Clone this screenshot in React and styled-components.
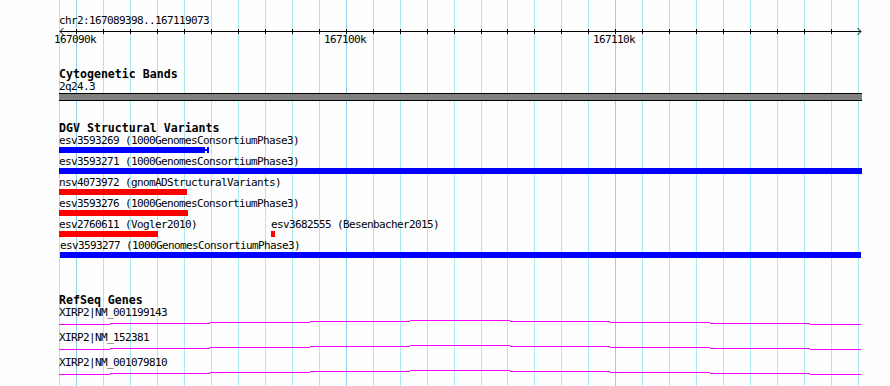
import React from 'react';
import styled, { createGlobalStyle } from 'styled-components';

const ORIGIN_BP = 167090000;
const ORIGIN_PX = 75.8;
const PX_PER_BP = 0.02698;
const TRACK_LEFT = 59;
const TRACK_RIGHT = 862;

const toPx = (bp) => ORIGIN_PX + (bp - ORIGIN_BP) * PX_PER_BP;
const clampPx = (x) => Math.min(TRACK_RIGHT, Math.max(TRACK_LEFT, x));
const localX = (bp) => Math.round(clampPx(toPx(bp))) - TRACK_LEFT;

const kbTicks = Array.from({ length: 30 }, (_, i) => ({
  kb: 167090 + i,
  x: Math.round(ORIGIN_PX + i * 26.98),
  major: i % 10 === 0,
}));

const dgvRows = [
  [{ id: 'esv3593269', src: '1000GenomesConsortiumPhase3', start: 167089000, end: 167094789, color: '#0000ff', capped: true }],
  [{ id: 'esv3593271', src: '1000GenomesConsortiumPhase3', start: 167089000, end: 167120000, color: '#0000ff' }],
  [{ id: 'nsv4073972', src: 'gnomADStructuralVariants', start: 167089000, end: 167094122, color: '#ff0000' }],
  [{ id: 'esv3593276', src: '1000GenomesConsortiumPhase3', start: 167089000, end: 167094159, color: '#ff0000' }],
  [
    { id: 'esv2760611', src: 'Vogler2010', start: 167089000, end: 167093047, color: '#ff0000' },
    { id: 'esv3682555', src: 'Besenbacher2015', start: 167097235, end: 167097383, color: '#ff0000' },
  ],
  [{ id: 'esv3593277', src: '1000GenomesConsortiumPhase3', start: 167089414, end: 167119085, color: '#0000ff' }],
];

const genes = ['XIRP2|NM_001199143', 'XIRP2|NM_152381', 'XIRP2|NM_001079810'];
const geneSteps = [
  [0, 51, 5], [51, 151, 4], [151, 251, 3], [251, 351, 2], [351, 451, 1],
  [451, 551, 2], [551, 651, 3], [651, 751, 4], [751, 802, 5],
];

const GlobalStyle = createGlobalStyle`
  html, body { margin: 0; padding: 0; background: #fdfefd; }
`;

const Page = styled.div`
  position: relative;
  width: 890px;
  height: 386px;
  overflow: hidden;
  background: #fdfefd;
  color: #000;
  font-family: "DejaVu Sans Mono", "Liberation Mono", monospace;
`;

const Grid = styled.svg`
  position: absolute;
  top: 0;
  left: 0;
  z-index: 0;
  pointer-events: none;
`;

const Main = styled.div`
  position: relative;
  z-index: 1;
  display: flex;
  flex-direction: column;
  width: 803px;
  padding: 15px 0 0 59px;
`;

const PlainText = styled.div`
  font-size: 11px;
  letter-spacing: -0.62px;
  line-height: 12px;
  height: 12px;
  white-space: nowrap;
`;

const RulerSvg = styled.svg`
  display: block;
  overflow: visible;
`;

const TrackTitle = styled.div`
  font-size: 11.6px;
  font-weight: bold;
  line-height: ${(p) => p.$lh || 14}px;
  height: ${(p) => p.$lh || 14}px;
  margin-top: ${(p) => p.$gap}px;
  white-space: nowrap;
`;

const CytoBar = styled.div`
  height: 6px;
  border-top: 1px solid #000;
  border-bottom: 1px solid #000;
  background: #808080;
`;

const FeatureRow = styled.div`
  position: relative;
  height: 21px;
`;

const FeatureLabel = styled(PlainText)`
  position: absolute;
  top: 0;
`;

const FeatureBar = styled.div`
  position: absolute;
  top: 12px;
  height: 6px;
  background: ${(p) => p.$color};
  &::after {
    content: '';
    display: ${(p) => (p.$capped ? 'block' : 'none')};
    position: absolute;
    left: 100%;
    top: 0;
    width: 4px;
    height: 100%;
    background:
      linear-gradient(${(p) => p.$color}, ${(p) => p.$color}) right / 2px 100% no-repeat,
      linear-gradient(${(p) => p.$color}, ${(p) => p.$color}) left center / 2px 2px no-repeat;
  }
`;

const GeneRow = styled.div`
  display: flex;
  flex-direction: column;
`;

const GeneGlyph = styled.svg`
  display: block;
`;

function Ruler() {
  return (
    <RulerSvg width="803" height="18">
      <line x1="1" y1="4.5" x2="802" y2="4.5" stroke="#000" strokeWidth="1" />
      <polyline points="4.5,1 1,4.5 4.5,8" fill="none" stroke="#000" strokeWidth="1" />
      <polyline points="798.5,1 802,4.5 798.5,8" fill="none" stroke="#000" strokeWidth="1" />
      {kbTicks.slice(0, 29).map((t) => (
        <line key={t.kb} x1={t.x - TRACK_LEFT + 0.5} y1="2" x2={t.x - TRACK_LEFT + 0.5} y2="7" stroke="#000" strokeWidth="1" />
      ))}
      {kbTicks.filter((t) => t.major).map((t) => (
        <text
          key={t.kb}
          x={t.x - TRACK_LEFT - 1}
          y="16"
          textAnchor="middle"
          fontSize="11"
          letterSpacing="-0.62"
          fontFamily="DejaVu Sans Mono, monospace"
          fill="#000"
        >
          {`${t.kb}k`}
        </text>
      ))}
    </RulerSvg>
  );
}

export default function App() {
  return (
    <>
      <GlobalStyle />
      <Page>
        <Grid width="890" height="386">
          <line x1="59.5" y1="0" x2="59.5" y2="386" stroke="#aae9ee" strokeWidth="1" />
          {kbTicks.map((t) => (
            <line
              key={t.kb}
              x1={t.x + 0.5}
              y1="0"
              x2={t.x + 0.5}
              y2="386"
              stroke={t.major ? '#8fcfea' : '#aae9ee'}
              strokeWidth="1"
            />
          ))}
        </Grid>
        <Main>
          <PlainText>chr2:167089398..167119073</PlainText>
          <Ruler />

          <TrackTitle $gap={22}>Cytogenetic Bands</TrackTitle>
          <PlainText>2q24.3</PlainText>
          <CytoBar />

          <TrackTitle $gap={20}>DGV Structural Variants</TrackTitle>
          {dgvRows.map((row, i) => (
            <FeatureRow key={i}>
              {row.map((f) => {
                const left = localX(f.start);
                const width = localX(f.end) - left;
                return (
                  <React.Fragment key={f.id}>
                    <FeatureLabel style={{ left }}>{`${f.id} (${f.src})`}</FeatureLabel>
                    <FeatureBar $color={f.color} $capped={f.capped} style={{ left, width }} />
                  </React.Fragment>
                );
              })}
            </FeatureRow>
          ))}

          <TrackTitle $gap={33} $lh={13}>RefSeq Genes</TrackTitle>
          {genes.map((g) => (
            <GeneRow key={g}>
              <PlainText>{g}</PlainText>
              <GeneGlyph width="803" height="13">
                <path
                  d={geneSteps.map(([a, b, y]) => `M${a} ${y + 0.5} H${b}`).join(' ')}
                  stroke="#ff00ff"
                  strokeWidth="1"
                  fill="none"
                />
              </GeneGlyph>
            </GeneRow>
          ))}
        </Main>
      </Page>
    </>
  );
}
